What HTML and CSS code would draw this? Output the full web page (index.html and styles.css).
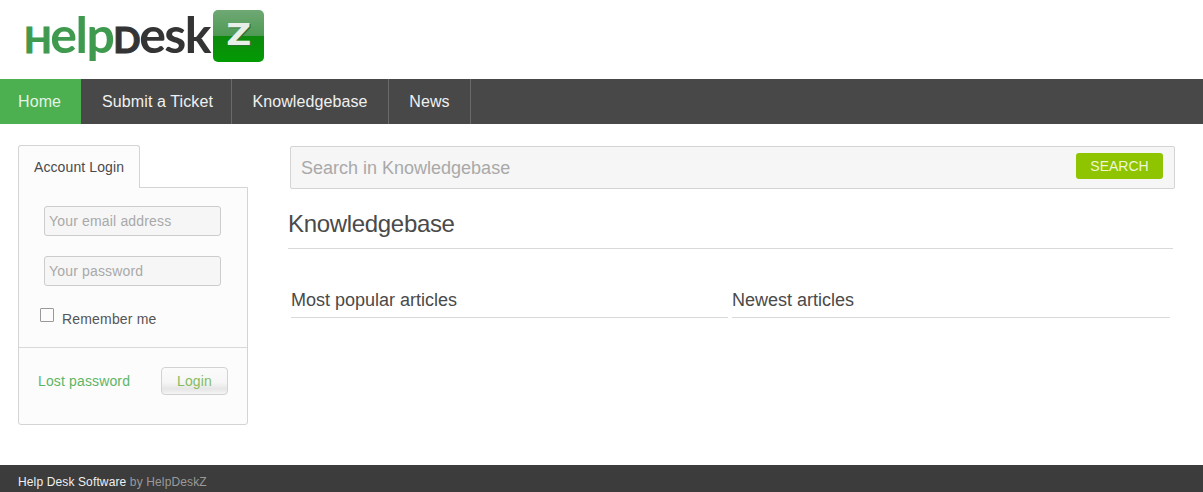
FILE: index.html
```html
<!doctype html>
<html>
<head>
    <meta charset="utf-8">
    <title>Help Desk Software</title>
    <link rel="stylesheet" href="styles.css">
</head>
<body>
<div id="header">
    <a class="logo" href="#">
        <span class="logoHelp"><span class="logoCap">H</span>elp</span><span class="logoDesk"><span class="logoCap">D</span>esk</span>
        <span class="logoBadge"><span class="logoZ">Z</span></span>
    </a>
</div>
<ul id="menu">
    <li class="current"><a href="#">Home</a></li>
    <li><a href="#">Submit a Ticket</a></li>
    <li><a href="#">Knowledgebase</a></li>
    <li><a href="#">News</a></li>
</ul>
<div id="wrapper">
    <div id="sidebar">
        <div class="tab">Account Login</div>
        <form class="loginBox">
            <div class="loginFields">
                <input class="field" type="text" placeholder="Your email address" />
                <input class="field" type="password" placeholder="Your password" />
                <label class="remember"><input type="checkbox" /><span class="checkBox"></span><span class="rememberText">Remember me</span></label>
            </div>
            <div class="loginActions">
                <a class="lost" href="#">Lost password</a>
                <button class="loginBtn" type="button">Login</button>
            </div>
        </form>
    </div>
    <div id="main">
        <form class="searchBox">
            <input class="searchInput" type="text" placeholder="Search in Knowledgebase" />
            <button class="searchBtn" type="button">SEARCH</button>
        </form>
        <h1 class="pageTitle">Knowledgebase</h1>
        <div class="columns">
            <h2 class="colTitle">Most popular articles</h2>
            <h2 class="colTitle">Newest articles</h2>
        </div>
    </div>
</div>
<div id="footer"><a href="#">Help Desk Software</a> by HelpDeskZ</div>
</body>
</html>
```

FILE: styles.css
```css
html, body {
    margin: 0;
    background: #ffffff;
    font-family: "Liberation Sans", Arial, sans-serif;
    color: #4a4a4a;
}
a {
    text-decoration: none;
}
#header {
    height: 79px;
    box-sizing: border-box;
    padding: 0 0 0 24px;
    overflow: hidden;
}
.logo {
    display: flex;
    align-items: flex-start;
    height: 79px;
    font-family: Lato, "Open Sans", sans-serif;
    font-size: 50px;
    font-weight: 700;
    line-height: 68px;
    letter-spacing: -1.5px;
    white-space: nowrap;
}
.logoCap {
    font-size: 36px;
    font-weight: 700;
    -webkit-text-stroke: 1px;
}
.logoHelp {
    color: #3f9a50;
}
.logoDesk {
    color: #343434;
}
.logoBadge {
    width: 51px;
    height: 52px;
    margin: 10px 0 0 3px;
    border-radius: 5px;
    background: linear-gradient(#6fa874 0, #4f9a55 49%, #0c8a0c 51%, #039a03 100%);
    color: #e8efe8;
    font-family: "DejaVu Sans", sans-serif;
    font-size: 30px;
    font-weight: 700;
    line-height: 50px;
    letter-spacing: 0;
    text-align: center;
    text-shadow: 1px 1px 0 #2f6f35;
}
.logoZ {
    display: inline-block;
    transform: scaleX(1.15);
}
#menu {
    display: flex;
    height: 45px;
    margin: 0;
    padding: 0;
    list-style: none;
    background: #484848;
}
#menu li {
    border-right: 1px solid #6a6a6a;
    text-align: center;
}
#menu li:nth-child(2) {
    width: 147px;
    padding-left: 2px;
}
#menu li:nth-child(3) {
    width: 156px;
}
#menu li:nth-child(4) {
    width: 81px;
}
#menu a {
    display: block;
    font-size: 16px;
    letter-spacing: 0.1px;
    line-height: 45px;
    color: #f0f0f0;
}
#menu li.current {
    width: 81px;
    border-right: 1px solid #484848;
    background: #4caf50;
}
#menu li.current a {
    padding: 0 20px 0 18px;
    color: #e4f4e4;
}
#wrapper {
    display: flex;
    padding: 21px 30px 0 18px;
}
#sidebar {
    width: 230px;
    flex: none;
    margin-right: 40px;
}
.tab {
    position: relative;
    z-index: 1;
    width: 122px;
    height: 43px;
    box-sizing: border-box;
    border: 1px solid #d4d4d4;
    border-bottom: 0;
    border-radius: 3px 3px 0 0;
    background: #fcfcfc;
    font-size: 14px;
    letter-spacing: 0.1px;
    line-height: 43px;
    text-align: center;
    color: #4a4a4a;
}
.loginBox {
    height: 238px;
    box-sizing: border-box;
    margin-top: -1px;
    border: 1px solid #d4d4d4;
    border-radius: 0 0 3px 3px;
    background: #fcfcfc;
}
.loginFields {
    height: 160px;
    box-sizing: border-box;
    padding: 18px 0 0 25px;
    border-bottom: 1px solid #d9d9d9;
}
.field {
    display: block;
    width: 177px;
    height: 30px;
    box-sizing: border-box;
    margin-bottom: 20px;
    padding: 0 4px;
    border: 1px solid #cccccc;
    border-radius: 3px;
    background: #f6f6f6;
    font-family: inherit;
    font-size: 14px;
    letter-spacing: 0.17px;
}
.field::placeholder {
    color: #a9a9a9;
    opacity: 1;
}
.remember {
    display: flex;
    align-items: flex-start;
    margin-left: -4px;
    padding-top: 2px;
    font-size: 14px;
    letter-spacing: 0.18px;
    line-height: 16px;
    color: #555555;
}
.remember input {
    display: none;
}
.checkBox {
    width: 14px;
    height: 14px;
    margin: 0 8px 0 0;
    border: 1px solid #999999;
    border-radius: 1px;
    background: #fcfcfc;
    box-sizing: border-box;
}
.rememberText {
    margin-top: 3px;
}
.loginActions {
    display: flex;
    align-items: center;
    justify-content: space-between;
    padding: 19px 19px 0 19px;
}
.lost {
    font-size: 14px;
    letter-spacing: 0.14px;
    color: #5cb567;
}
.loginBtn {
    width: 67px;
    height: 28px;
    padding: 0;
    border: 1px solid #d2d2d2;
    border-radius: 4px;
    background: linear-gradient(#fbfbfb 0, #f6f6f6 55%, #e6e6e6 80%, #f4f4f4 100%);
    font-family: inherit;
    font-size: 14px;
    letter-spacing: 0.15px;
    color: #86bb60;
}
#main {
    flex: 1;
    min-width: 0;
}
.searchBox {
    display: flex;
    align-items: flex-start;
    justify-content: space-between;
    height: 43px;
    box-sizing: border-box;
    margin: 1px -2px 0 2px;
    padding: 6px 11px 0 10px;
    border: 1px solid #d4d4d4;
    border-radius: 2px;
    background: #f6f6f6;
}
.searchInput {
    flex: 1;
    height: 30px;
    padding: 0;
    border: 0;
    outline: none;
    background: transparent;
    font-family: inherit;
    font-size: 18px;
}
.searchInput::placeholder {
    color: #a9a9a9;
    opacity: 1;
}
.searchBtn {
    width: 87px;
    height: 26px;
    padding: 0;
    border: 0;
    border-radius: 3px;
    background: #8fc400;
    font-family: inherit;
    font-size: 14px;
    color: #eef6d8;
}
.pageTitle {
    height: 60px;
    box-sizing: border-box;
    margin: 0;
    padding-top: 20px;
    border-bottom: 1px solid #d9d9d9;
    font-size: 24px;
    font-weight: 400;
    letter-spacing: -0.32px;
    line-height: 30px;
    color: #4a4a4a;
}
.columns {
    display: flex;
    gap: 4px;
    padding: 35px 3px 0 3px;
}
.colTitle {
    flex: 1;
    height: 34px;
    box-sizing: border-box;
    margin: 0;
    border-bottom: 1px solid #d9d9d9;
    font-size: 18px;
    font-weight: 400;
    line-height: 32px;
    color: #4a4a4a;
}
.colTitle:first-child {
    flex: 0 0 437px;
}
#footer {
    height: 27px;
    box-sizing: border-box;
    margin-top: 40px;
    padding-left: 18px;
    background: #3c3c3c;
    font-size: 12px;
    letter-spacing: 0.13px;
    line-height: 34px;
    overflow: hidden;
    color: #9a9a9a;
}
#footer a {
    color: #f0f0f0;
}
```
